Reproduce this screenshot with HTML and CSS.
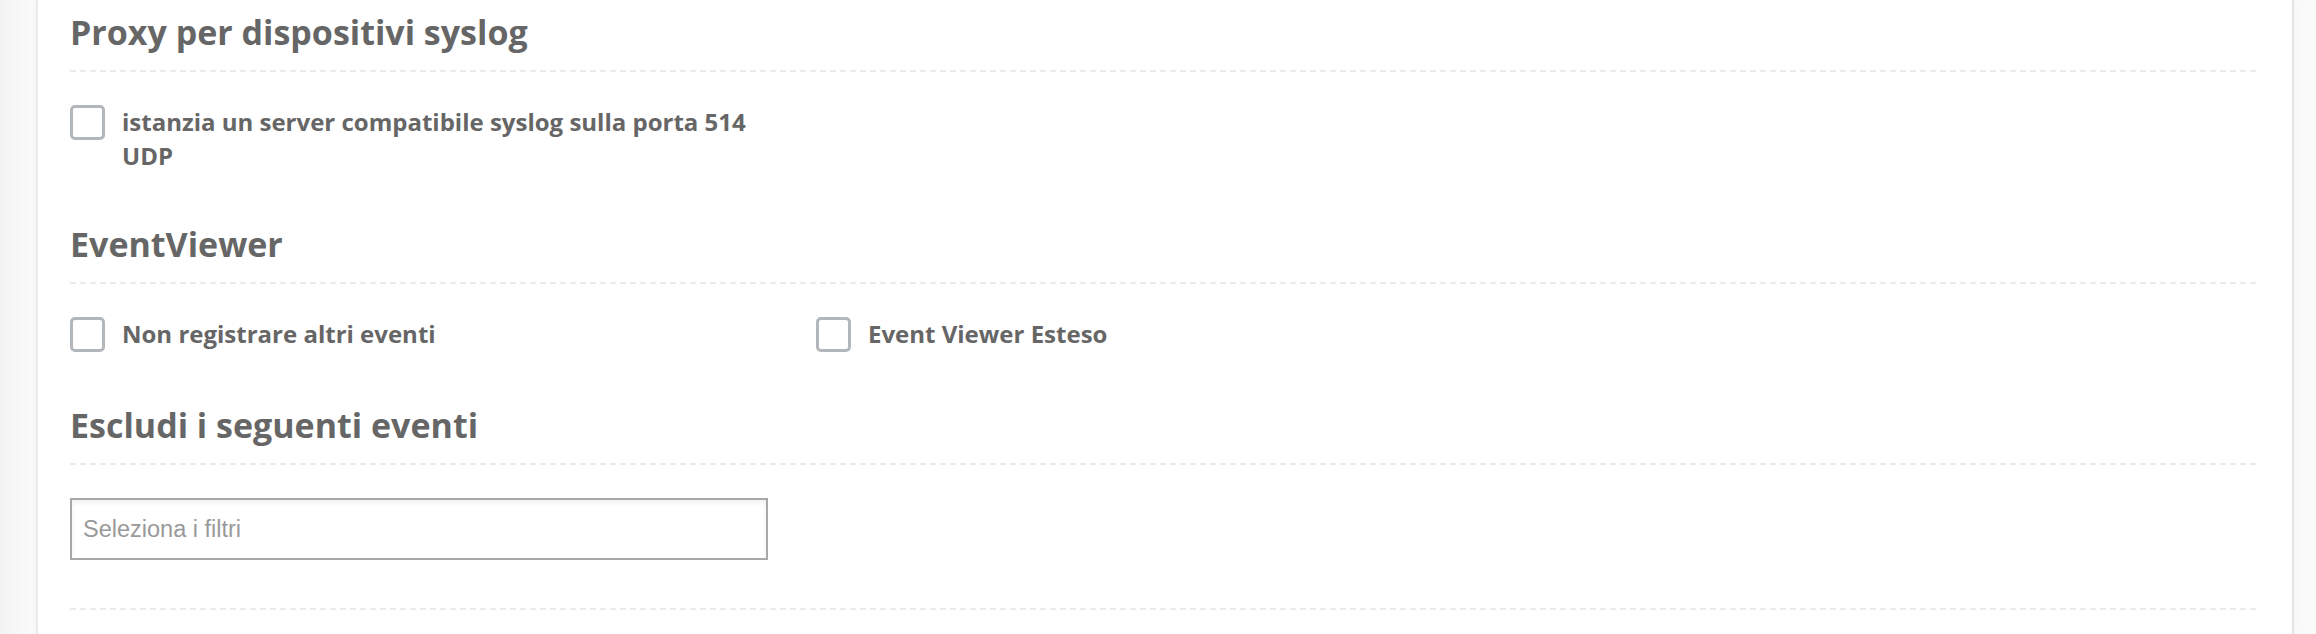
FILE: index.html
```html
<!DOCTYPE html>
<html lang="it">
<head>
<meta charset="utf-8">
<title>Impostazioni log</title>
<link rel="stylesheet" href="styles.css">
</head>
<body>
<div class="page">
  <div class="card">
    <section class="section">
      <h2 class="section-title">Proxy per dispositivi syslog</h2>
      <div class="row">
        <label class="check">
          <input type="checkbox" class="check-box">
          <span class="check-text narrow">istanzia un server compatibile syslog sulla porta 514 UDP</span>
        </label>
      </div>
    </section>
    <section class="section">
      <h2 class="section-title">EventViewer</h2>
      <div class="row row-events">
        <label class="check">
          <input type="checkbox" class="check-box">
          <span class="check-text">Non registrare altri eventi</span>
        </label>
        <label class="check">
          <input type="checkbox" class="check-box">
          <span class="check-text">Event Viewer Esteso</span>
        </label>
      </div>
    </section>
    <section class="section">
      <h2 class="section-title">Escludi i seguenti eventi</h2>
      <div class="row row-input">
        <input type="text" class="filter-input" placeholder="Seleziona i filtri">
      </div>
    </section>
    <div class="footer-rule"></div>
  </div>
</div>
</body>
</html>
```

FILE: styles.css
```css
html, body {
  margin: 0;
  padding: 0;
}

body {
  background: #f8f8f8;
  font-family: "Open Sans", "Noto Sans", sans-serif;
  color: #666666;
  height: 634px;
  overflow: hidden;
}

.page {
  padding: 0 22px 0 36px;
  height: 634px;
  background: linear-gradient(to right, #f3f3f3 0, #fafafa 30px, #fafafa 100%);
}

.card {
  background: #ffffff;
  border-left: 2px solid #ebebeb;
  border-right: 2px solid #e4e4e4;
  box-shadow: 0 0 6px rgba(0, 0, 0, 0.04);
  padding: 12px 32px 0 32px;
  height: 634px;
  box-sizing: border-box;
}

.section-title {
  margin: 0;
  font-size: 34px;
  line-height: 40px;
  font-weight: 700;
  color: #666666;
}

.section-title::after,
.footer-rule {
  content: "";
  display: block;
  height: 2px;
  background-image: linear-gradient(to right, #ebebeb 0, #ebebeb 6px, transparent 6px, transparent 10px);
  background-size: 10px 2px;
  background-repeat: repeat-x;
}

.section-title::after {
  margin-top: 18px;
}

.row {
  display: grid;
  grid-template-columns: 746px 746px;
  padding-top: 33px;
  padding-bottom: 51px;
}

.row-events {
  padding-bottom: 53px;
}

.check {
  display: flex;
  align-items: flex-start;
  gap: 17px;
}

.check-box {
  appearance: none;
  -webkit-appearance: none;
  margin: 0;
  flex: none;
  width: 35px;
  height: 35px;
  border: 3px solid #b1b7bd;
  border-radius: 5px;
  background: #ffffff;
  box-sizing: border-box;
}

.check-text {
  font-size: 24px;
  line-height: 34px;
  font-weight: 700;
  color: #666666;
}

.check-text.narrow {
  max-width: 640px;
}

.filter-input {
  width: 698px;
  height: 62px;
  box-sizing: border-box;
  border: 2px solid #a8a8a8;
  border-radius: 0;
  box-shadow: inset 0 3px 5px rgba(0, 0, 0, 0.06);
  padding: 0 11px;
  font-family: "Liberation Sans", Arial, sans-serif;
  font-size: 23.5px;
  color: #555555;
  background: #ffffff;
  outline: none;
}

.filter-input::placeholder {
  color: #999999;
}

.row-input {
  padding-bottom: 48px;
}
```
